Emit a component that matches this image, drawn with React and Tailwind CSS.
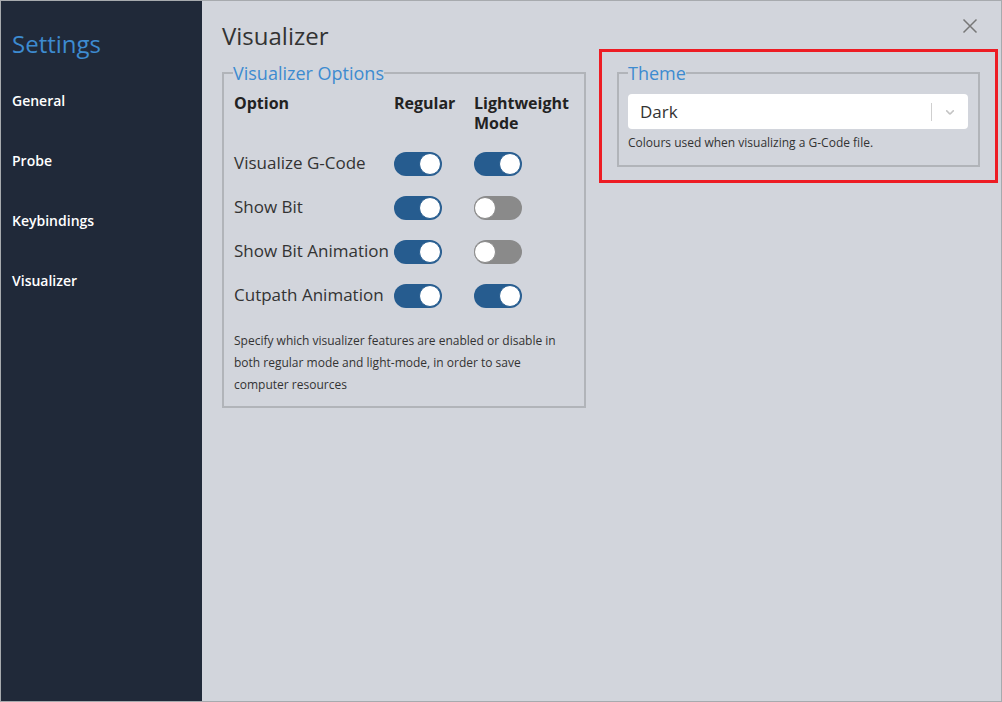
import React from "react";

function Toggle({ on }) {
  return (
    <div
      className={`relative w-[48px] h-[24px] rounded-full ${on ? "bg-[#265c8f]" : "bg-[#8a8a8a]"}`}
    >
      <div
        className={`absolute top-[1px] w-[22px] h-[22px] rounded-full bg-white border ${
          on ? "right-[1px] border-[#265c8f]" : "left-[0px] border-[#8a8a8a]"
        }`}
      />
    </div>
  );
}

const rows = [
  ["Visualize G-Code", true, true],
  ["Show Bit", true, false],
  ["Show Bit Animation", true, false],
  ["Cutpath Animation", true, true],
];

export default function App() {
  return (
    <div
      className="w-[1002px] h-[702px] border border-[#a7aaae] flex bg-[#d2d5dc] overflow-hidden"
      style={{ fontFamily: '"Open Sans", "Noto Sans", sans-serif' }}
    >
      <aside className="w-[201px] shrink-0 bg-[#202939] pl-[11px] pt-[27px]">
        <div className="text-[24px] leading-[32px] text-[#3d8bd0]">Settings</div>
        <nav className="mt-[31px] flex flex-col gap-[40px]">
          {["General", "Probe", "Keybindings", "Visualizer"].map((t) => (
            <div key={t} className="text-[14px] leading-[20px] font-semibold text-white">
              {t}
            </div>
          ))}
        </nav>
      </aside>

      <main className="relative flex-1 flex items-start pl-[20px]">
        <button className="absolute right-[22px] top-[16px] w-[18px] h-[18px] flex items-center justify-center text-[#777]">
          <svg width="16" height="16" viewBox="0 0 16 16" fill="none" stroke="currentColor" strokeWidth="1.5">
            <path d="M1.5 1.5 L14.5 14.5 M14.5 1.5 L1.5 14.5" />
          </svg>
        </button>

        <section className="w-[364px] shrink-0 pt-[19px]">
          <h1 className="text-[24px] leading-[32px] text-[#333]">Visualizer</h1>
          <fieldset className="mt-[9px] border-2 border-[#b1b4b9] pl-[9px] pr-[10px] pb-[10px]">
            <legend className="text-[18px] leading-[24px] text-[#3d8bd0] px-0">Visualizer Options</legend>
            <div className="pl-[1px] pt-[8px]">
              <div className="grid grid-cols-[160px_80px_1fr] text-[16px] leading-[20px] font-bold text-[#222]">
                <div>Option</div>
                <div>Regular</div>
                <div>
                  Lightweight
                  <br />
                  Mode
                </div>
              </div>
              <div className="mt-[9px] flex flex-col">
                {rows.map(([label, a, b]) => (
                  <div key={label} className="grid grid-cols-[160px_80px_1fr] items-center h-[44px]">
                    <div className="text-[17px] leading-[22px] text-[#333] whitespace-nowrap -mt-[2px]">{label}</div>
                    <Toggle on={a} />
                    <Toggle on={b} />
                  </div>
                ))}
              </div>
              <p className="mt-[12px] text-[12px] leading-[22px] text-[#333]">
                Specify which visualizer features are enabled or disable in both regular mode and
                light-mode, in order to save computer resources
              </p>
            </div>
          </fieldset>
        </section>

        <section className="ml-[13px] mt-[48px] w-[399px] shrink-0 border-[3px] border-[#ed1c24] px-[15px] pb-[13px]">
          <fieldset className="mt-[9px] border-2 border-[#b1b4b9] pl-[9px] pr-[10px] pb-[13px]">
            <legend className="text-[18px] leading-[24px] text-[#3d8bd0] px-0">Theme</legend>
            <div className="mt-[9px] h-[35px] bg-white rounded-[4px] flex items-center">
              <div className="flex-1 pl-[12px] text-[17px] text-[#333]">Dark</div>
              <div className="w-px h-[18px] bg-[#cfcfcf]" />
              <div className="w-[36px] flex items-center justify-center text-[#c4c4c4]">
                <svg width="14" height="14" viewBox="0 0 20 20" fill="currentColor">
                  <path d="M4.516 7.548c0.436-0.446 1.043-0.481 1.576 0l3.908 3.747 3.908-3.747c0.533-0.481 1.141-0.446 1.574 0 0.436 0.445 0.408 1.197 0 1.615-0.406 0.418-4.695 4.502-4.695 4.502-0.217 0.223-0.502 0.335-0.787 0.335s-0.570-0.112-0.789-0.335c0 0-4.287-4.084-4.695-4.502s-0.436-1.17 0-1.615z" />
                </svg>
              </div>
            </div>
            <p className="mt-[5px] text-[12px] leading-[18px] text-[#333]">
              Colours used when visualizing a G-Code file.
            </p>
          </fieldset>
        </section>
      </main>
    </div>
  );
}
